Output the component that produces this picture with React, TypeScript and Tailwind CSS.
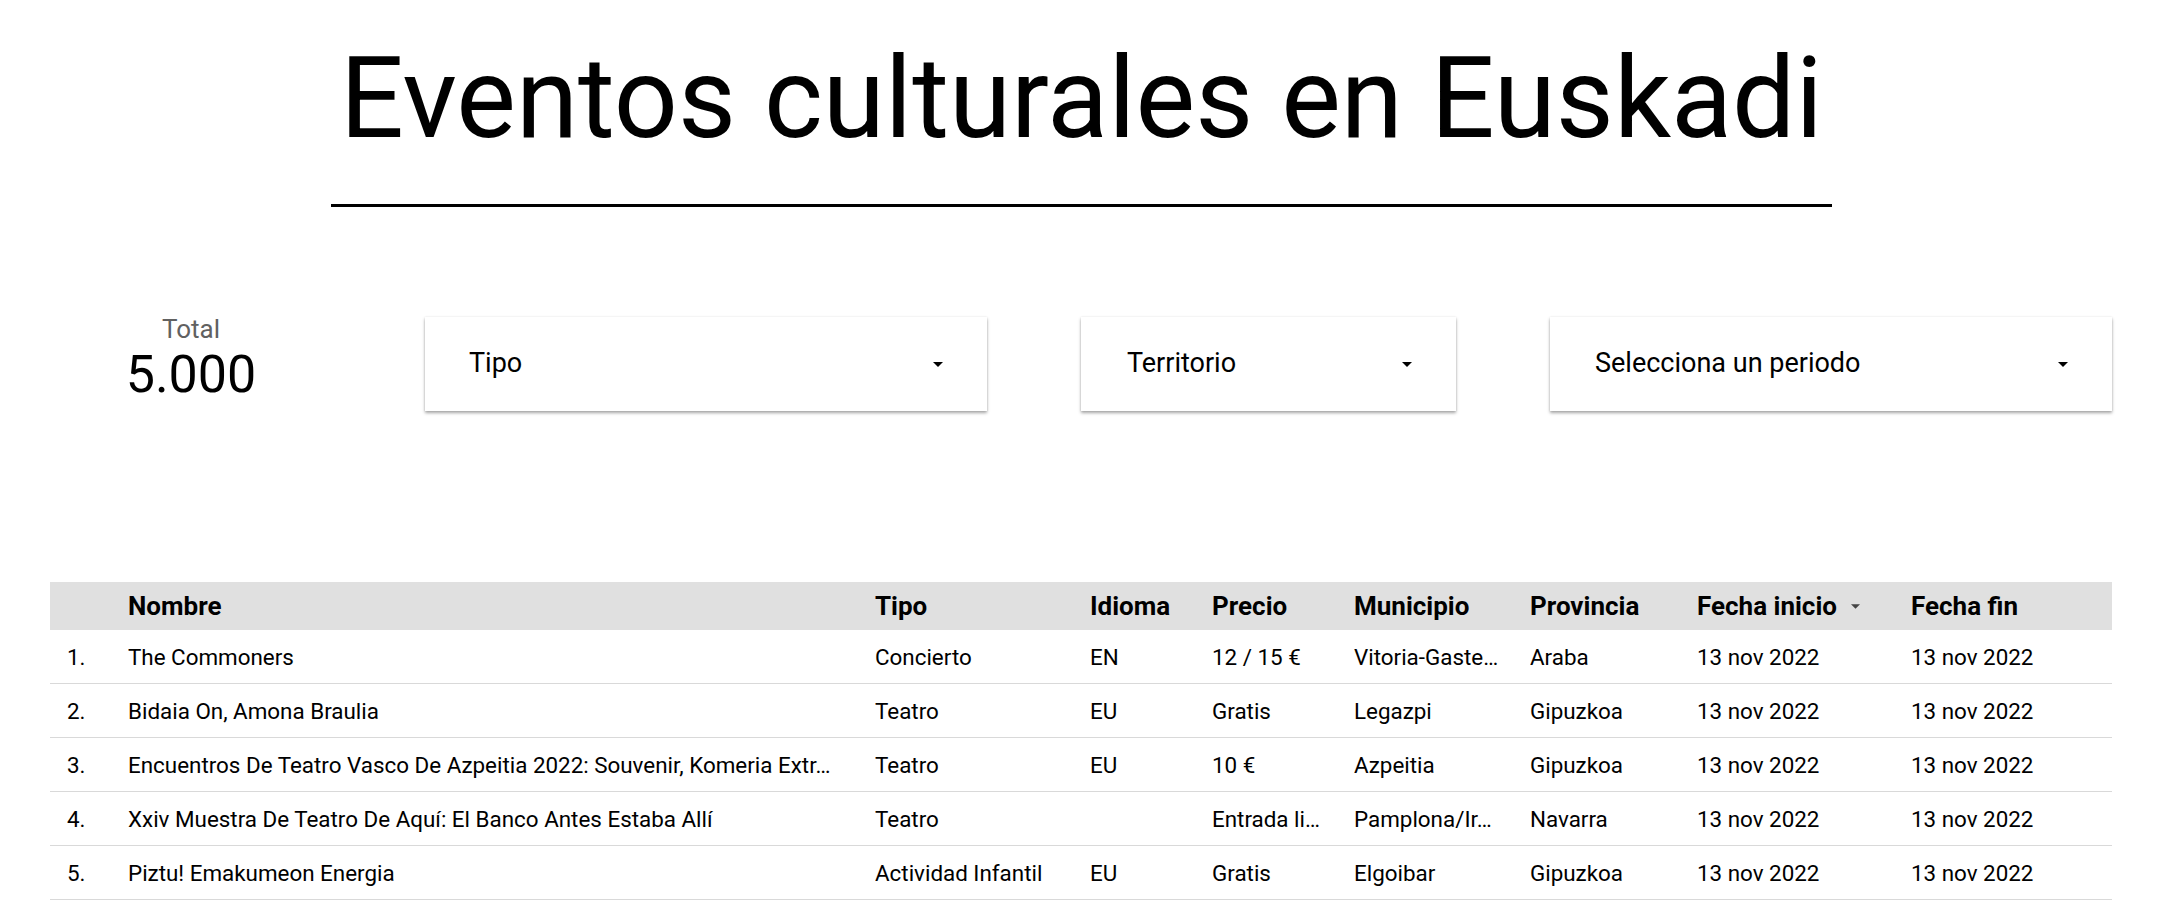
import { ReactNode } from "react";

const cols = ["", "Nombre", "Tipo", "Idioma", "Precio", "Municipio", "Provincia", "Fecha inicio", "Fecha fin"];

const rows = [
  ["1.", "The Commoners", "Concierto", "EN", "12 / 15 €", "Vitoria-Gaste…", "Araba", "13 nov 2022", "13 nov 2022"],
  ["2.", "Bidaia On, Amona Braulia", "Teatro", "EU", "Gratis", "Legazpi", "Gipuzkoa", "13 nov 2022", "13 nov 2022"],
  ["3.", "Encuentros De Teatro Vasco De Azpeitia 2022: Souvenir, Komeria Extr…", "Teatro", "EU", "10 €", "Azpeitia", "Gipuzkoa", "13 nov 2022", "13 nov 2022"],
  ["4.", "Xxiv Muestra De Teatro De Aquí: El Banco Antes Estaba Allí", "Teatro", "", "Entrada li…", "Pamplona/Ir…", "Navarra", "13 nov 2022", "13 nov 2022"],
  ["5.", "Piztu! Emakumeon Energia", "Actividad Infantil", "EU", "Gratis", "Elgoibar", "Gipuzkoa", "13 nov 2022", "13 nov 2022"],
];

const grid = "grid grid-cols-[78px_747px_215px_122px_142px_176px_167px_214px_1fr]";

function Caret({ className = "" }: { className?: string }) {
  return (
    <svg viewBox="0 0 10 5" className={className} aria-hidden>
      <path d="M0 0h10L5 5z" fill="currentColor" />
    </svg>
  );
}

function Dropdown({ label, width, pl }: { label: ReactNode; width: string; pl: string }) {
  return (
    <div
      className={`${width} ${pl} h-[94px] shrink-0 bg-white flex items-center justify-between pr-[44px] shadow-[0_2px_3px_rgba(0,0,0,0.35),0_0_2px_rgba(0,0,0,0.08)]`}
    >
      <span className="text-[27px] leading-[30px] -mt-[3px] text-black">{label}</span>
      <Caret className="w-[10px] h-[5px] text-black" />
    </div>
  );
}

export default function App() {
  return (
    <div className="min-h-screen bg-white font-['Roboto',sans-serif] text-black">
      <header className="pt-[34px]">
        <h1 className="text-center text-[112.5px] leading-[130px] font-normal">Eventos culturales en Euskadi</h1>
        <div className="mx-auto mt-[40px] w-[1501px] h-[3px] bg-black" />
      </header>

      <section className="mt-[110px] px-[51px] flex items-start gap-[94px]">
        <div className="w-[280px] shrink-0 -mt-[3px] flex flex-col items-center">
          <span className="text-[26px] leading-[30px] text-[#616161]">Total</span>
          <span className="text-[52px] leading-[62px]">5.000</span>
        </div>
        <Dropdown label="Tipo" width="w-[562px]" pl="pl-[44px]" />
        <Dropdown label="Territorio" width="w-[375px]" pl="pl-[46px]" />
        <Dropdown label="Selecciona un periodo" width="w-[562px]" pl="pl-[45px]" />
      </section>

      <section className="mt-[171px] ml-[50px] w-[2062px]">
        <div className={`${grid} h-[48px] items-center bg-[#e0e0e0] text-[26px] leading-[30px] font-bold`}>
          {cols.map((c, i) => (
            <div key={i} className={i === 0 ? "pl-[17px]" : "flex items-center whitespace-nowrap"}>
              {c}
              {c === "Fecha inicio" && <Caret className="ml-[14px] w-[9px] h-[5px] text-[#444]" />}
            </div>
          ))}
        </div>
        {rows.map((r) => (
          <div key={r[0]} className={`${grid} h-[54px] items-center border-b border-[#d9d9d9] text-[22.4px] leading-[26px]`}>
            {r.map((v, i) => (
              <div key={i} className={`${i === 0 ? "pl-[17px]" : ""} whitespace-nowrap overflow-hidden`}>
                {v}
              </div>
            ))}
          </div>
        ))}
      </section>
    </div>
  );
}
